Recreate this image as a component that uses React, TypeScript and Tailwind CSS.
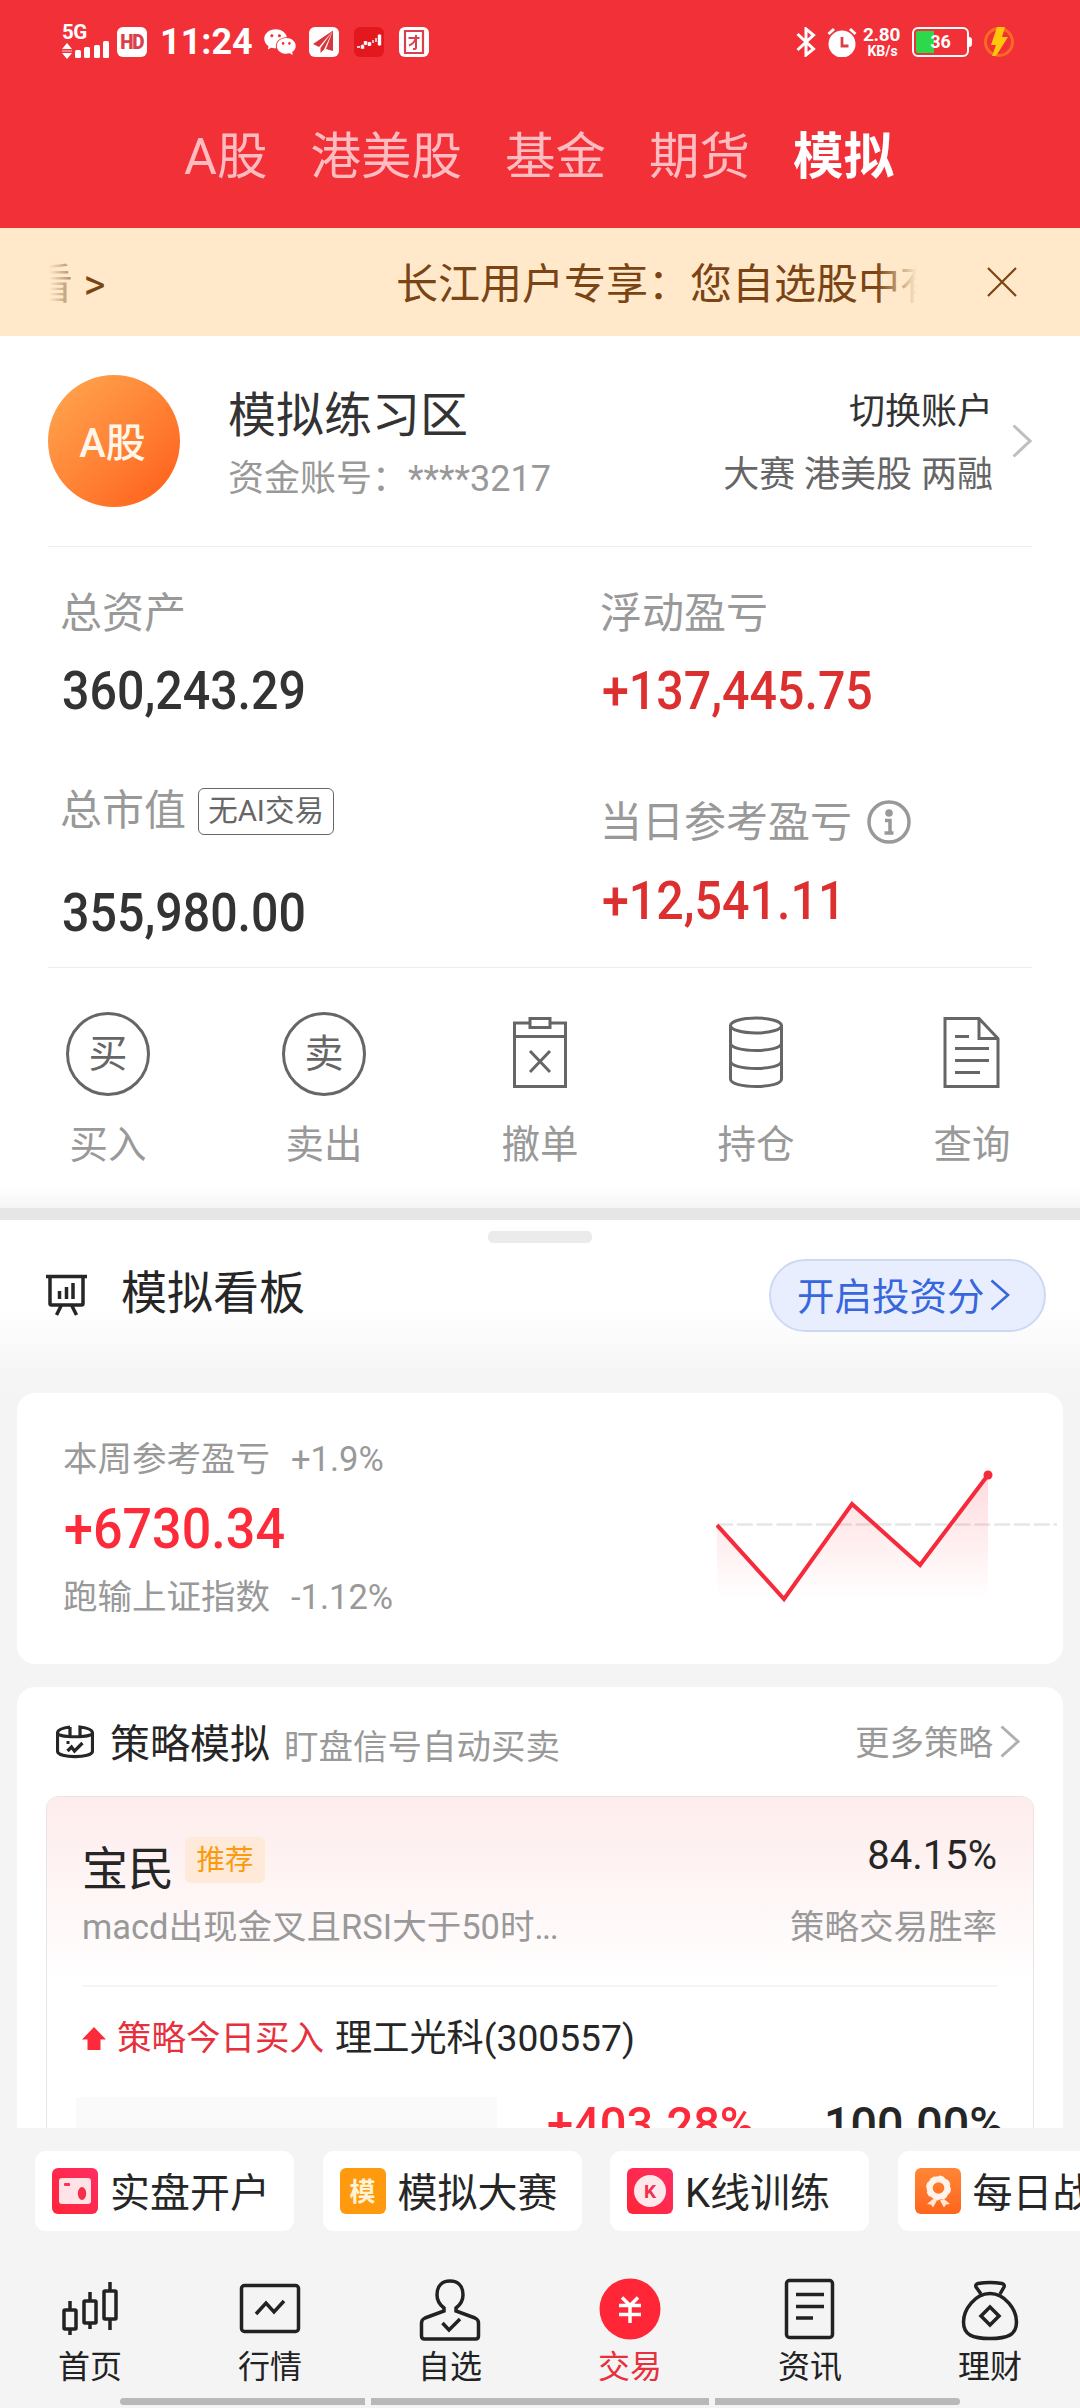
import type { ReactNode } from "react";
import { AiFillWechat } from "react-icons/ai";

const numberStyle = "ml-[2px] inline-block origin-left scale-x-[0.895] text-[54px] leading-[60px] font-medium whitespace-nowrap";

const StatusBar = () => (
    <div className="flex h-[84px] items-center justify-between pr-[66px] pl-[62px] text-white">
        <div className="flex items-center">
            <div className="relative h-[34px] w-[49px]">
                <span className="absolute -top-[3px] left-0 text-[20.500px] leading-[20px] font-bold tracking-[-0.5px]">5G</span>
                <svg className="absolute bottom-0 left-0 overflow-visible" width="49" height="16" viewBox="0 0 49 16" fill="currentColor">
                    <path d="M5 0l5 6H0zM5 16l5-6H0z" />
                    <path d="M0 7.400h10v1.200H0z" opacity=".6" />
                    <rect x="13" y="7" width="6" height="8" rx="1.500" />
                    <rect x="22" y="4" width="6" height="11" rx="1.500" />
                    <rect x="32" y="2" width="6" height="13" rx="1.500" />
                    <rect x="41" y="-2" width="6" height="17" rx="1.500" />
                </svg>
            </div>
            <div className="ml-[6px] flex h-[30px] w-[30px] items-center justify-center rounded-[6px] bg-white text-[21px] leading-none font-black tracking-[-1.5px] text-[#d9404a]">
                <span className="scale-x-90">HD</span>
            </div>
            <span className="ml-[13px] text-[36px] leading-none font-bold">11:24</span>
            <AiFillWechat className="ml-[9px] h-[36px] w-[36px]" />
            <svg className="ml-[11px]" width="30" height="30" viewBox="0 0 30 30">
                <rect width="30" height="30" rx="6" fill="#fff" />
                <path d="M24 3.500L4 17l6 3zM24 3.500L11.500 21v5l3.600-3.600zM24 3.500L17 22l7 2z" fill="#d8353d" />
            </svg>
            <svg className="ml-[15px]" width="30" height="30" viewBox="0 0 30 30">
                <rect width="30" height="30" rx="6" fill="#e3181f" />
                <g fill="none" stroke="#fff" strokeWidth="1.400">
                    <path d="M3 20h3M8.500 17.500v4M11.500 14v4M15 15v4M19 13v3M22 11v4M25.500 7.500v11" />
                    <path d="M7.500 19h2v2h-2zM10.500 15h2v2h-2zM14.500 16h2v2h-2zM24.500 8.500h2v9h-2z" />
                </g>
            </svg>
            <svg className="ml-[15px]" width="30" height="30" viewBox="0 0 30 30">
                <rect width="30" height="30" rx="6" fill="#fff" />
                <g fill="none" stroke="#d9404a">
                    <path d="M6 4h18v22H6z" strokeWidth="2.200" />
                    <path d="M9.500 11h11M17 8v12.500q0 2-3 1.500M16.500 12q-2 5-6.500 6.500" strokeWidth="2" />
                </g>
            </svg>
        </div>
        <div className="flex items-center">
            <svg width="20" height="30" viewBox="0 0 20 30" fill="none" stroke="currentColor" strokeWidth="3">
                <path d="M1.500 7l16 15L10 28V2l7.500 6L1.500 23" />
            </svg>
            <svg className="ml-[11px]" width="30" height="30" viewBox="0 0 30 30" fill="none">
                <circle cx="15" cy="17" r="13.500" fill="#fff" />
                <path d="M1.500 7L7 2M28.500 7L23 2" stroke="#fff" strokeWidth="3" />
                <path d="M15 10v9h6.500" stroke="#d9404a" strokeWidth="2.800" />
            </svg>
            <div className="ml-[6px] w-[37px] text-center leading-none font-bold">
                <div className="text-[19px] leading-[17px] tracking-[-0.3px]">2.80</div>
                <div className="pl-[2px] text-[14px] leading-[16px]">KB/s</div>
            </div>
            <div className="ml-[12px] flex items-center">
                <div className="relative flex h-[30px] w-[57px] items-center justify-center rounded-[6px] border-2 border-white text-[18px] leading-none font-bold">
                    <div className="absolute top-[2px] bottom-[2px] left-[2px] w-[18px] rounded-l-[2px] bg-[#2bd94b]" />
                    <span className="relative">36</span>
                </div>
                <div className="h-[10px] w-[3px] rounded-r-sm bg-white" />
            </div>
            <svg className="ml-[12px]" width="30" height="30" viewBox="0 0 30 30">
                <circle cx="15" cy="15" r="13.500" fill="none" stroke="#fb6a22" strokeWidth="3" />
                <path d="M13 0h8l-3 10h6L12 29H8l4-11H7z" fill="#ffc60a" />
            </svg>
        </div>
    </div>
);

const Chevron = ({ className, width = 20, height = 34, stroke = 3 }: { className?: string; width?: number; height?: number; stroke?: number }) => (
    <svg className={className} width={width} height={height} viewBox={`0 0 ${width} ${height}`} fill="none" stroke="currentColor" strokeWidth={stroke}>
        <path d={`M1.500 1.500L${width - 2} ${height / 2}L1.500 ${height - 1.5}`} />
    </svg>
);

const Tabs = () => (
    <nav className="flex h-[144px] items-center gap-[43px] pt-[3px] pl-[184px] text-[50.500px] leading-none text-[#ffbcc0]">
        <span>A股</span>
        <span>港美股</span>
        <span>基金</span>
        <span>期货</span>
        <span className="font-bold text-white">模拟</span>
    </nav>
);

const Notice = () => (
    <div className="flex h-[108px] items-center bg-[#ffe9ca] pl-[49px] text-[42px] leading-[60px] text-[#7a4414]">
        <div className="relative mt-[5px] flex w-[868px] overflow-hidden whitespace-nowrap">
            <span className="-ml-[18px] w-[365px] shrink-0">看 &gt;</span>
            <span>长江用户专享：您自选股中有</span>
            <div className="absolute inset-y-0 left-0 w-[40px] bg-gradient-to-r from-[#ffe9ca] to-[#ffe9ca]/0" />
            <div className="absolute inset-y-0 right-0 w-[40px] bg-gradient-to-l from-[#ffe9ca] to-[#ffe9ca]/0" />
        </div>
        <svg className="ml-[70px]" width="30" height="30" viewBox="0 0 30 30" stroke="currentColor" strokeWidth="2.200">
            <path d="M1 1l28 28M29 1L1 29" />
        </svg>
    </div>
);

const Account = () => (
    <div className="mx-[48px] flex h-[211px] items-center border-b border-[#ececec]">
        <div className="flex h-[132px] w-[132px] items-center justify-center rounded-full bg-gradient-to-br from-[#ffa850] to-[#ff5a14] pt-[5px] pr-[3px] text-[40px] font-medium text-[#fff6ea]">
            A股
        </div>
        <div className="mt-[12px] ml-[48px] leading-[63px]">
            <p className="text-[48px] text-[#333]">模拟练习区</p>
            <p className="mt-px text-[36px] text-[#999]">资金账号：****3217</p>
        </div>
        <div className="mt-[5px] ml-auto text-right text-[36px] leading-[63px]">
            <p className="text-[#333]">切换账户</p>
            <p className="text-[#666]">大赛 港美股 两融</p>
        </div>
        <Chevron className="ml-[19px] text-[#bfbfbf]" />
    </div>
);

const Assets = () => (
    <div className="mx-[48px] flex h-[421px] border-b border-[#ececec] pt-[37px] text-[42px] leading-[60px] text-[#999]">
        <div className="w-[540px] pl-[12px]">
            <p>总资产</p>
            <p className="mt-[17px] h-[60px] text-[#333]"><span className={numberStyle}>360,243.29</span></p>
            <div className="mt-[60px] flex h-[60px] items-center">
                总市值
                <span className="ml-[12px] flex h-[47px] w-[136px] items-center justify-center rounded-[6px] border-[1.500px] border-[#666] text-[29.500px] text-[#666]">
                    无AI交易
                </span>
            </div>
            <p className="mt-[42px] h-[60px] text-[#333]"><span className={numberStyle}>355,980.00</span></p>
        </div>
        <div className="pl-[12px]">
            <p>浮动盈亏</p>
            <p className="mt-[17px] h-[60px] text-[#dc3030]"><span className={numberStyle}>+137,445.75</span></p>
            <div className="mt-[72px] flex h-[60px] items-center">
                当日参考盈亏
                <svg className="-mt-[3px] ml-[15px]" width="44" height="44" viewBox="0 0 44 44" fill="none" stroke="#999" strokeWidth="3.500">
                    <circle cx="22" cy="22" r="20" />
                    <circle cx="22" cy="13" r="3.800" fill="#999" stroke="none" />
                    <path d="M18 20.500h5v12.500M17.500 33h9" />
                </svg>
            </div>
            <p className="mt-[18px] h-[60px] text-[#dc3030]"><span className={numberStyle}>+12,541.11</span></p>
        </div>
    </div>
);

const RoundIcon = ({ children }: { children: string }) => (
    <div className="flex h-[84px] w-[84px] items-center justify-center rounded-full border-[3px] border-[#666] text-[39px] leading-none text-[#666]">
        <span className="mt-px">{children}</span>
    </div>
);

const LineIcon = ({ children }: { children: ReactNode }) => (
    <svg className="-mt-[2px]" width="60" height="76" viewBox="0 0 60 76" fill="none" stroke="#666" strokeWidth="3">
        {children}
    </svg>
);

const actions = [
    { label: "买入", icon: <RoundIcon>买</RoundIcon> },
    { label: "卖出", icon: <RoundIcon>卖</RoundIcon> },
    {
        label: "撤单",
        icon: (
            <LineIcon>
                <path d="M20 8H4.500v63.500h51V8H40M4.500 21.500h51M20 3.500h20v9H20zM20 36l20 21M40 36L20 57" />
            </LineIcon>
        ),
    },
    {
        label: "持仓",
        icon: (
            <LineIcon>
                <ellipse cx="30" cy="10.500" rx="25.500" ry="7.500" />
                <path d="M4.500 10.500V64c0 10 51 10 51 0V10.500M4.500 28c0 10 51 10 51 0M4.500 46c0 10 51 10 51 0" />
            </LineIcon>
        ),
    },
    {
        label: "查询",
        icon: (
            <LineIcon>
                <path d="M3 3.500h34l19 20v48H3zM37 3.500v20h19M13 21.500h14M13 33.500h34M13 45.500h34M13 57.500h25" />
            </LineIcon>
        ),
    },
];

const Actions = () => (
    <div className="relative h-[240px]">
        <div className="grid grid-cols-5 pt-[43px]">
            {actions.map(({ label, icon }) => (
                <div key={label} className="flex flex-col items-center">
                    <div className="flex h-[86px] items-center">{icon}</div>
                    <span className="mt-[18px] text-[38.500px] leading-[60px] text-[#999]">{label}</span>
                </div>
            ))}
        </div>
        <div className="absolute inset-x-0 bottom-0 h-[20px] bg-gradient-to-b from-white to-[#f5f5f5]" />
    </div>
);

const BoardHeader = () => (
    <div className="h-[173px] bg-gradient-to-b from-white from-50% to-[#f5f5f5] to-90% pt-[11px]">
        <div className="mx-auto h-[12px] w-[104px] rounded-[5px] bg-[#ebebeb]" />
        <div className="mt-[16px] flex h-[72px] items-center pr-[34px] pl-[46px]">
            <svg width="41" height="42" viewBox="0 0 41 42" fill="none" stroke="#262626" strokeWidth="3.500">
                <path d="M0 2.500h41M4 3v26.500q0 1.500 1.500 1.500h30q1.500 0 1.500-1.500V3M15 32l-4.500 9M26 32l4.500 9M13.500 25v-8M20.500 25V13M27 25V9" />
            </svg>
            <h2 className="-mt-[3px] ml-[34px] text-[46px] text-[#262626]">模拟看板</h2>
            <button className="ml-auto flex h-[73px] w-[277px] items-center rounded-full border-2 border-[#cdd9f4] bg-[#e8eefe] pl-[26px] text-[37.500px] text-[#3766dd]">
                <span className="mt-[4px]">开启投资分</span>
                <Chevron className="ml-[5px]" width={20} height={32} stroke={2.6} />
            </button>
        </div>
    </div>
);

const trend = [
    [1, 50],
    [68, 124],
    [136, 29],
    [204, 90],
    [272, 0],
];

const WeekCard = () => {
    const line = trend.map(([x, y]) => `${x},${y + 6}`).join(" ");
    return (
        <section className="mx-[17px] flex h-[271px] rounded-[18px] bg-white pt-[36px] pl-[46px]">
            <div className="text-[34.500px] leading-[60px] whitespace-pre text-[#999]">
                <p>本周参考盈亏<span className="ml-[21px]">+1.9%</span></p>
                <p className="mt-[10px] h-[60px] text-[#fd2a3a]">
                    <span className="ml-px inline-block origin-left scale-x-[0.93] text-[56px] font-medium">+6730.34</span>
                </p>
                <p className="mt-[8px]">跑输上证指数<span className="ml-[21px]">-1.12%</span></p>
            </div>
            <svg className="mt-[40px] mr-[5px] ml-auto" width="342" height="136" viewBox="0 0 342 136" fill="none">
                <defs>
                    <linearGradient id="trendFill" x1="0" y1="0" x2="0" y2="1">
                        <stop offset="0" stopColor="#fd2a3a" stopOpacity=".17" />
                        <stop offset="1" stopColor="#fd2a3a" stopOpacity="0" />
                    </linearGradient>
                </defs>
                <path d="M1 55.500h340" stroke="#e6e6e6" strokeWidth="2.500" strokeDasharray="16 3.800" />
                <polygon points={`1,130 ${line} 272,130`} fill="url(#trendFill)" />
                <polyline points={line} stroke="#f52b3b" strokeWidth="4" />
                <circle cx="272" cy="6" r="4.500" fill="#f52b3b" />
            </svg>
        </section>
    );
};

const StrategyCard = () => (
    <section className="mx-[17px] mt-[23px] h-[441px] overflow-hidden rounded-t-[18px] bg-white">
        <div className="flex h-[109px] items-center pt-[5px] pr-[43px] pl-[39px] text-[34.500px] text-[#999]">
            <svg className="-mt-[5px]" width="38" height="34" viewBox="0 0 38 34" fill="none" stroke="#262626" strokeWidth="3.200">
                <path d="M14 2C6 3 1.500 5 1.500 8v18c0 7.500 35 7.500 35 0V8c0-3-4.500-5-12.500-6v9M14 2v9M1.500 8c0 5 35 5 35 0" />
                <path d="M11.500 26l4-4 3 4 8-8M10.500 17.500h3" />
            </svg>
            <h2 className="mt-[2px] ml-[16px] text-[40px] text-[#262626]">策略模拟</h2>
            <span className="mt-[7px] ml-[14px]">盯盘信号自动买卖</span>
            <span className="ml-auto">更多策略</span>
            <Chevron className="-mt-[5px] ml-[7px] text-[#b0b0b0]" width={20} height={33} />
        </div>
        <div className="mx-[29px] h-[400px] rounded-[12px] border border-[#e9e4e4] bg-white">
            <div className="h-[188px] rounded-t-[11px] bg-gradient-to-b from-[#feecec] to-white px-[36px] pt-[30px] text-[34.500px] leading-[60px] text-[#999]">
                <div className="-ml-px flex">
                    <span className="mt-[12px] text-[46px] text-[#262626]">宝民</span>
                    <span className="mt-[10px] ml-[11px] h-[46px] w-[80px] rounded-[6px] bg-[#ffe9d9] text-center text-[28.500px] leading-[47px] text-[#fb9a0e]">
                        推荐
                    </span>
                    <span className="-mt-px ml-auto text-[40px] text-[#262626]">84.15%</span>
                </div>
                <div className="-mt-[2px] -ml-px flex justify-between">
                    <span>macd出现金叉且RSI大于50时<span className="tracking-[-1.5px]">...</span></span>
                    <span>策略交易胜率</span>
                </div>
            </div>
            <div className="mx-[35px] h-[1.500px] bg-[#f5f5f5]" />
            <div className="mt-[22px] flex h-[60px] items-center px-[35px] text-[34.500px] text-[#e8303c]">
                <svg width="24" height="23" viewBox="0 0 24 23" fill="#fd2a3a">
                    <path d="M12 0l12 12.500h-5.500V23h-13V12.500H0z" />
                </svg>
                <span className="ml-[11px]">策略今日买入</span>
                <span className="ml-[11px] text-[37.200px] text-[#262626]">理工光科(300557)</span>
            </div>
            <div className="mt-[28px] ml-[29px] flex h-[60px] text-[49px] leading-[56px] font-medium">
                <div className="w-[421px] bg-[#fafafa]" />
                <span className="ml-[50px] inline-block w-[277px] origin-left scale-x-[0.96] text-[#fd2a3a]">+403.28%</span>
                <span className="inline-block origin-left scale-x-[0.95] text-[#262626]">100.00%</span>
            </div>
        </div>
    </section>
);

const shortcuts = [
    {
        label: "实盘开户",
        tile: "bg-gradient-to-tr from-[#ff2434] to-[#ff2d62]",
        icon: (
            <svg width="46" height="46" viewBox="0 0 46 46">
                <rect x="7" y="10" width="32" height="26" rx="3" fill="#ffe3e6" />
                <rect x="12" y="15" width="6" height="3" rx="1" fill="#ff3050" />
                <ellipse cx="30" cy="25.500" rx="4.200" ry="6.500" fill="#f5304c" />
            </svg>
        ),
    },
    { label: "模拟大赛", tile: "bg-[#ff990d]", icon: <span className="mt-px text-[26px] font-bold text-[#fff3d6]">模</span> },
    {
        label: "K线训练",
        tile: "bg-gradient-to-tr from-[#ff2434] to-[#ff2d62]",
        icon: (
            <span className="flex h-[32px] w-[32px] items-center justify-center rounded-full bg-[#ffe8ec] text-[19px] font-bold text-[#f0304c]">
                K
            </span>
        ),
    },
    {
        label: "每日战报",
        tile: "bg-gradient-to-b from-[#ff8636] to-[#ff641c]",
        icon: (
            <svg width="46" height="46" viewBox="0 0 46 46" fill="none">
                <circle cx="23.500" cy="20" r="8.800" stroke="#fff3ea" strokeWidth="6" />
                <circle cx="23.500" cy="20" r="11.200" stroke="#fff3ea" strokeWidth="2.500" strokeDasharray="5 3.800" />
                <path d="M18 31l-6 5 4 .500 2 3 4-7zM29 31l6 5-4 .500-2 3-4-7z" fill="#ffe6d6" />
            </svg>
        ),
    },
];

const Shortcuts = () => (
    <div className="flex gap-[28.500px] pt-[23px] pl-[35px]">
        {shortcuts.map(({ label, tile, icon }) => (
            <div key={label} className="flex h-[80px] w-[259px] shrink-0 items-center rounded-[11px] bg-white pl-[17px]">
                <div className={`flex h-[46px] w-[46px] items-center justify-center rounded-[6px] leading-none ${tile}`}>{icon}</div>
                <span className="mt-[6px] ml-[12px] text-[40px] leading-[60px] whitespace-nowrap text-[#262626]">{label}</span>
            </div>
        ))}
    </div>
);

const NavIcon = ({ children }: { children: ReactNode }) => (
    <svg width="64" height="64" viewBox="0 0 64 64" fill="none" stroke="currentColor" strokeWidth="3.500">
        {children}
    </svg>
);

const navItems = [
    {
        label: "首页",
        icon: (
            <NavIcon>
                <rect x="6" y="33" width="12" height="19" rx="1" />
                <rect x="26" y="24" width="12" height="22" rx="1" />
                <rect x="46" y="14" width="12" height="28" rx="1" />
                <path d="M12 24v9M12 52v6M32 15v9M32 46v6M52 5v9M52 42v11" />
            </NavIcon>
        ),
    },
    {
        label: "行情",
        icon: (
            <NavIcon>
                <rect x="3.500" y="8.500" width="57" height="46" rx="3" />
                <path d="M18 37l10-11 8 9 10-11" />
            </NavIcon>
        ),
    },
    {
        label: "自选",
        icon: (
            <NavIcon>
                <path d="M26 34v-3c-4-3-7-8-7-13 0-9 5-14 13-14s13 5 13 14c0 5-3 10-7 13v3l19 7q3.500 1.500 3.500 5v13q0 3-3 3h-51q-3 0-3-3V46q0-3.500 3.500-5z" />
                <path d="M24.500 46l6.500 7 11-11" />
            </NavIcon>
        ),
    },
    {
        label: "交易",
        active: true,
        icon: (
            <NavIcon>
                <circle cx="32" cy="32" r="30.500" fill="#ff2638" stroke="none" />
                <path d="M24 20.500l8 8 8-8M21 28.500h22M21 37.500h22M32 28.500V46" stroke="#fff" />
            </NavIcon>
        ),
    },
    {
        label: "资讯",
        icon: (
            <NavIcon>
                <rect x="8.500" y="3.500" width="46" height="57" rx="3" />
                <path d="M18 17.500h28M18 29.500h28M18 41h17" />
            </NavIcon>
        ),
    },
    {
        label: "理财",
        icon: (
            <NavIcon>
                <path d="M23 17l-5-7q-1-2.500 2-3.500 12-2 24 0 3 1 2 3.500l-4 7" />
                <path d="M32 16.500c15 0 26.500 16 26.500 28.500 0 13-9 16.500-26.500 16.500S5.500 58 5.500 45C5.500 32.500 17 16.500 32 16.500z" />
                <path d="M32 30l9 9-9 9-9-9z" />
            </NavIcon>
        ),
    },
];

const BottomNav = () => (
    <div className="mt-[46px] grid grid-cols-6">
        {navItems.map(({ label, icon, active }) => (
            <div key={label} className={`flex flex-col items-center ${active ? "text-[#e8303c]" : "text-[#222]"}`}>
                {icon}
                <span className="mt-[5px] text-[32px] leading-[42px]">{label}</span>
            </div>
        ))}
    </div>
);

const App = () => (
    <main className="h-[2408px] w-[1080px] overflow-hidden bg-[#f4f4f4] font-[family-name:Roboto,'Noto_Sans_CJK_SC',sans-serif]" lang="zh-CN">
        <header className="bg-[#f23038]">
            <StatusBar />
            <Tabs />
        </header>
        <Notice />
        <div className="bg-white">
            <Account />
            <Assets />
            <Actions />
        </div>
        <div className="h-[12px] bg-[#e6e6e6]" />
        <BoardHeader />
        <WeekCard />
        <StrategyCard />
        <Shortcuts />
        <BottomNav />
        <div className="mt-[10px] flex gap-[6px] pl-[120px]">
            <div className="h-[7px] w-[245px] rounded-l-full bg-[#b9b9b9]" />
            <div className="h-[7px] w-[338px] bg-[#b9b9b9]" />
            <div className="h-[7px] w-[245px] rounded-r-full bg-[#b9b9b9]" />
        </div>
    </main>
);

export default App;
